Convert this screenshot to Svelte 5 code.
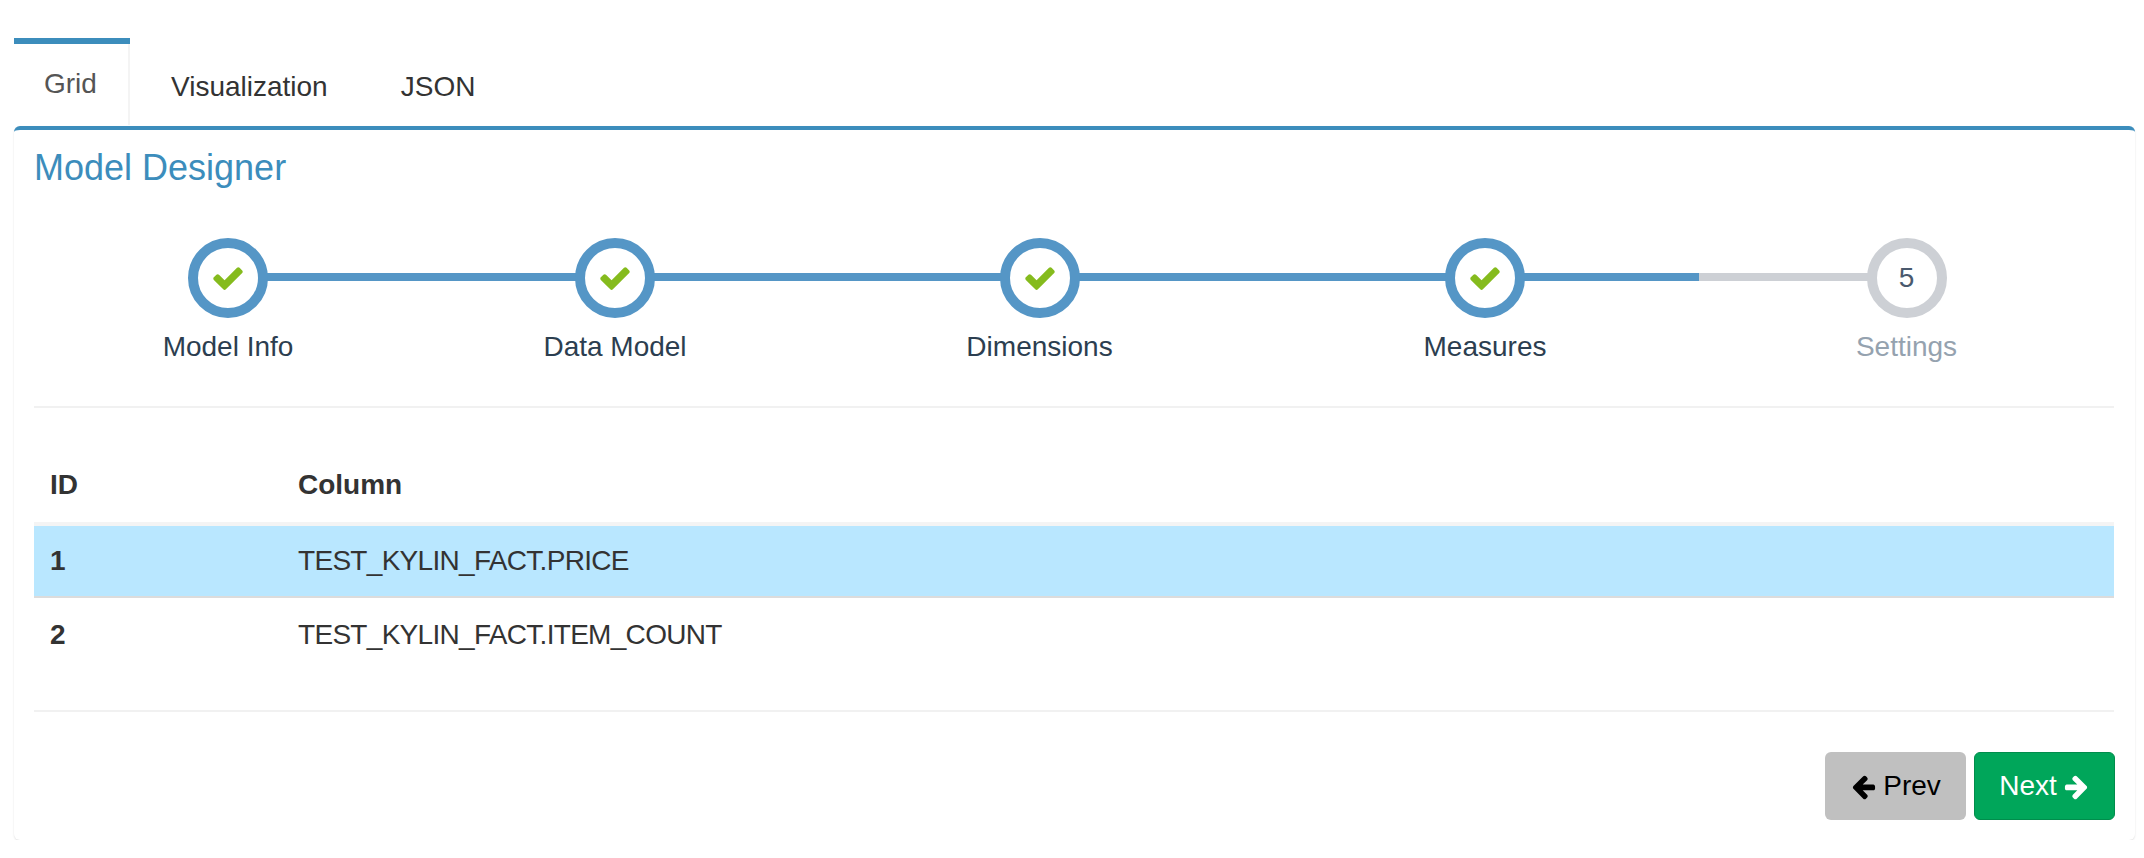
<script>
	const tabs = ["Grid", "Visualization", "JSON"]
	const steps = [
		{ label: "Model Info", done: true },
		{ label: "Data Model", done: true },
		{ label: "Dimensions", done: true },
		{ label: "Measures", done: true },
		{ label: "Settings", done: false, num: 5 }
	]
	const rows = [
		{ id: 1, column: "TEST_KYLIN_FACT.PRICE", selected: true },
		{ id: 2, column: "TEST_KYLIN_FACT.ITEM_COUNT", selected: false }
	]
</script>

<div class="page">
	<ul class="tabs">
		{#each tabs as tab, i}
			<li class={{ tab: true, active: i === 0 }}>{tab}</li>
		{/each}
	</ul>

	<div class="box">
		<h3 class="title">Model Designer</h3>

		<div class="steps">
			{#each steps as step}
				<div class={{ step: true, done: step.done }}>
					<div class="circle">
						{#if step.done}
							<svg class="check" viewBox="0 0 1792 1792"><path d="M1671 566q0 40-28 68l-724 724-136 136q-28 28-68 28t-68-28l-136-136-362-362q-28-28-28-68t28-68l136-136q28-28 68-28t68 28l294 295 656-657q28-28 68-28t68 28l136 136q28 28 28 68z"/></svg>
						{:else}
							{step.num}
						{/if}
					</div>
					<div class="label">{step.label}</div>
				</div>
			{/each}
		</div>

		<table>
			<thead>
				<tr><th class="id">ID</th><th>Column</th></tr>
			</thead>
			<tbody>
				{#each rows as row}
					<tr class={{ selected: row.selected }}>
						<td class="id">{row.id}</td>
						<td>{row.column}</td>
					</tr>
				{/each}
			</tbody>
		</table>

		<div class="footer">
			<button class="btn prev">
				<svg class="arrow" viewBox="0 0 1792 1792"><path d="M1664 896v128q0 53-32.5 90.5t-84.5 37.5h-704l293 294q38 36 38 90t-38 90l-75 76q-37 37-90 37-52 0-91-37l-651-652q-37-37-37-90 0-52 37-91l651-650q38-38 91-38 52 0 90 38l75 74q38 38 38 91t-38 91l-293 293h704q52 0 84.5 37.5t32.5 90.5z"/></svg>
				Prev
			</button>
			<button class="btn next">
				Next
				<svg class="arrow" viewBox="0 0 1792 1792"><path d="M1600 960q0 54-37 91l-651 651q-39 37-91 37-51 0-90-37l-75-75q-38-38-38-91t38-91l293-293h-704q-52 0-84.5-37.5t-32.5-90.5v-128q0-53 32.5-90.5t84.5-37.5h704l-293-294q-38-36-38-90t38-90l75-75q38-38 90-38 53 0 91 38l651 651q37 35 37 90z"/></svg>
			</button>
		</div>
	</div>
</div>

<style>
	:global(body) {
		background: #fff;
	}

	.page {
		padding: 38px 9px 0 14px;
		font-family: "Liberation Sans", Arial, sans-serif;
		font-size: 28px;
		color: #333;
	}

	.tabs {
		display: flex;
		margin: 0;
		padding: 0;
		list-style: none;
		height: 88px;
	}

	.tab {
		padding: 29px 30px 0;
		margin-right: 13px;
		line-height: 40px;
		height: 60px;
	}

	.tab.active {
		width: 116px;
		height: 87px;
		box-sizing: border-box;
		margin-right: 11px;
		padding: 20px 0 0 30px;
		border-top: 6px solid #3c8dbc;
		box-shadow: inset -2px 0 0 #f4f4f4;
		color: #555;
	}

	.box {
		height: 714px;
		box-sizing: border-box;
		padding: 0 21px 0 20px;
		border-top: 4px solid #3c8dbc;
		border-radius: 6px;
		background: #fff;
		box-shadow: 0 1px 2px rgba(0, 0, 0, 0.12);
	}

	.title {
		margin: 0;
		padding-top: 18px;
		font-size: 36px;
		font-weight: 400;
		line-height: 40px;
		color: #3c8dbc;
	}

	.steps {
		display: grid;
		grid-template-columns: 388px 386px 463px 428px 1fr;
		margin-top: 50px;
		height: 170px;
		box-sizing: border-box;
		border-bottom: 2px solid #f1f1f1;
	}

	.step {
		position: relative;
		text-align: center;
	}

	.step::before {
		content: "";
		position: absolute;
		top: 35px;
		left: 0;
		right: 0;
		height: 8px;
		background: #cdd0d5;
	}

	.step.done::before {
		background: #5596c6;
	}

	.step:first-child::before {
		left: 50%;
	}

	.step:last-child::before {
		right: 50%;
	}

	.circle {
		position: relative;
		display: flex;
		align-items: center;
		justify-content: center;
		width: 80px;
		height: 80px;
		box-sizing: border-box;
		margin: 0 auto;
		border: 10px solid #cdd0d5;
		border-radius: 50%;
		background: #fff;
		font-size: 28px;
		color: #4a5a6e;
	}

	.done .circle {
		border-color: #5596c6;
	}

	.check {
		width: 34px;
		height: 34px;
		fill: #85bb1d;
	}

	.label {
		margin-top: 9px;
		line-height: 40px;
		color: #95a2af;
	}

	.done .label {
		color: #2c3e50;
	}

	table {
		width: 100%;
		margin-top: 34px;
		border-collapse: separate;
		border-spacing: 0;
		border-bottom: 2px solid #f1f1f1;
	}

	th,
	td {
		box-sizing: border-box;
		padding: 0 16px;
		text-align: left;
		line-height: 40px;
	}

	th {
		height: 84px;
		padding-top: 6px;
		font-weight: 700;
		border-bottom: 4px solid #f4f4f4;
	}

	td {
		height: 72px;
		letter-spacing: -0.7px;
		border-bottom: 2px solid #dcdcdc;
	}

	tbody tr:last-child td {
		height: 112px;
		padding-bottom: 38px;
		border-bottom: none;
	}

	.id {
		width: 248px;
		font-weight: 700;
	}

	.selected td {
		background: #b9e7ff;
	}

	.footer {
		display: flex;
		justify-content: flex-end;
		gap: 8px;
		margin-top: 40px;
		margin-right: -1px;
	}

	.btn {
		display: flex;
		align-items: center;
		justify-content: center;
		gap: 6px;
		width: 141px;
		height: 68px;
		border: 1px solid transparent;
		border-radius: 6px;
		font: inherit;
	}

	.arrow {
		width: 27px;
		height: 27px;
		fill: currentColor;
	}

	.prev {
		background: #c0c0c0;
		color: #000;
	}

	.next {
		background: #00a65a;
		border-color: #008d4c;
		color: #fff;
	}
</style>
